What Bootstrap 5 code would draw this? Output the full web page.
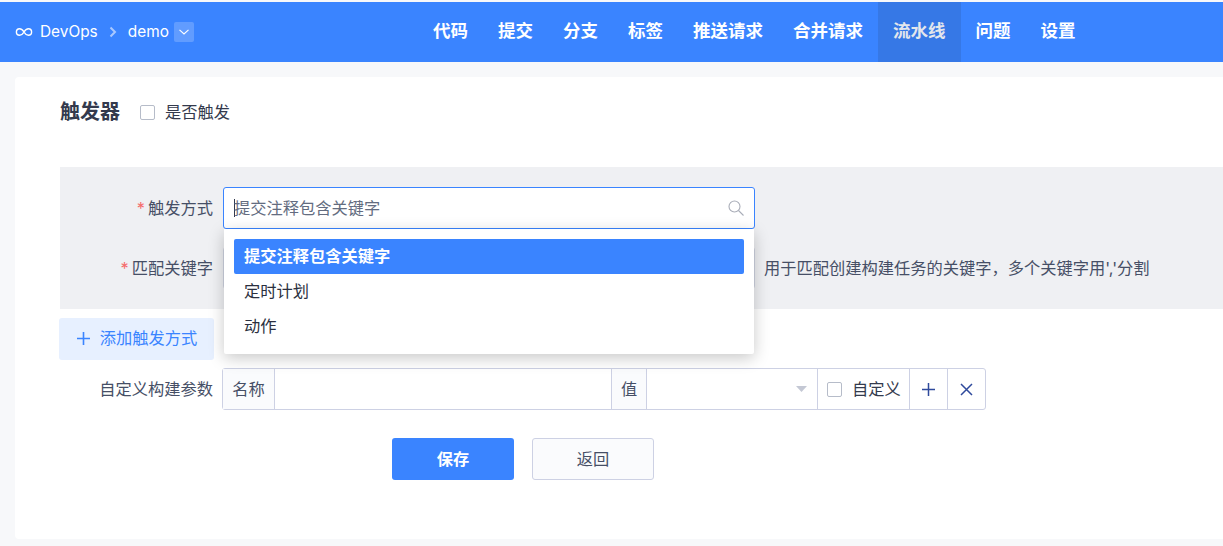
<!DOCTYPE html>
<html lang="zh-CN">
<head>
<meta charset="utf-8">
<title>流水线</title>
<link href="https://cdn.jsdelivr.net/npm/bootstrap@5.3.0/dist/css/bootstrap.min.css" rel="stylesheet">
<style>
html,body{height:546px;overflow:hidden}
body{background:#f7f8fa;font-family:Inter,"Noto Sans CJK SC",sans-serif;font-size:16.25px;color:#333a4d;padding-top:2px}
.top-bar{height:60px;background:#3a84ff;color:#fff;position:relative}
.crumb{position:absolute;left:15px;top:0;height:60px;font-size:15.4px}
.crumb-ico{margin-right:7px}
.crumb-sep{margin:0 11px 0 11px;color:#a9c8ff}
.crumb-toggle{width:20px;height:20px;border-radius:2px;background:#619cff;margin-left:5px}
.main-tabs{padding-left:418px;height:60px}
.tab-item{padding:0 15px;line-height:58px;font-size:17.5px;font-weight:700;color:#fff;text-decoration:none;display:block;height:60px}
.tab-item.on{background:#3678e6;color:#e3e6ec}
.sheet{margin:15px 0 0 15px;height:462px;background:#fff;border-radius:4px 0 0 4px;padding:0 0 0 45px;position:relative}
.head-row{height:70px}
.head-title{font-size:20px;font-weight:700;color:#333a4d;margin:0}
.tick{width:15px;height:15px;border:1px solid #b6bcc9;border-radius:2px;background:#fff;flex:none}
.tick-main{margin:0 10px 0 20px}
.gray-panel{margin-top:20px;height:142px;background:#eff0f3;padding-top:20px}
.form-line{height:42px}
.form-line+.form-line{margin-top:18px}
.lbl{width:163px;text-align:right;padding:0 10px 0 0;flex:none;color:#464f66}
.req{color:#f56c6c;margin-right:3px}
.fake-input{width:532px;height:42px;background:#fff;border:1px solid #3a84ff;border-radius:3px;flex:none;position:relative;padding:0 0 0 10px;color:#636c80}
.fake-input.plain{border-color:#cfd3e0}
.caret{width:1px;height:18px;background:#333a4d;margin-right:-1px}
.search-ico{position:absolute;right:9px;top:11px}
.tip{margin-left:9px;color:#464f66}
.menu-pop{position:absolute;left:209px;top:152px;width:530px;height:125px;background:#fff;box-shadow:0 4px 16px rgba(0,0,0,.22);padding:10px;z-index:5;border-radius:0 0 2px 2px}
.menu-entry{height:35px;line-height:35px;padding-left:10px;border-radius:2px;color:#2b3040}
.menu-entry.on{background:#3a84ff;color:#fff;font-weight:700}
.add-btn{margin:9px 0 0 -1px;width:155px;height:42px;background:#e7f0ff;color:#3a84ff;border:0;border-radius:3px;padding:0 0 1px}
.add-ico{margin-right:9px}
.param-row{margin-top:8px;height:42px}
.param-group{height:42px;border:1px solid #cdd1e4;border-radius:3px;background:#fff;margin-left:-1px;width:764px;flex:none}
.cell{height:100%;border-right:1px solid #cdd1e4;flex:none}
.cell:last-child{border-right:0}
.cell-gray{background:#fafbfd;color:#464f66}
.act-row{padding-left:332px;margin-top:28px}
.btn-go,.btn-back{width:122px;height:42px;border-radius:3px;font-size:16.25px;padding:0}
.btn-go{background:#3a84ff;color:#fff;border:0;font-weight:700;margin-right:18px}
.btn-back{background:#fafbfd;color:#464f66;border:1px solid #cdd1e4}
</style>
</head>
<body>
<header class="top-bar">
  <div class="crumb d-flex align-items-center">
    <svg class="crumb-ico" width="18" height="10" viewBox="0 0 18 10" fill="none" stroke="#fff" stroke-width="1.4"><path d="M9 5C7.5 2.500 6.200 1.800 4.600 1.800A3.200 3.200 0 0 0 4.600 8.200C6.200 8.200 7.500 7.500 9 5C10.500 2.500 11.800 1.800 13.400 1.800A3.200 3.200 0 0 1 13.400 8.200C11.800 8.200 10.500 7.500 9 5Z"/></svg>
    <span>DevOps</span>
    <svg class="crumb-sep" width="8" height="12" viewBox="0 0 8 12" fill="none" stroke="currentColor" stroke-width="2"><path d="M1.500 1.500L6 6L1.500 10.500"/></svg>
    <span>demo</span>
    <span class="crumb-toggle d-flex align-items-center justify-content-center">
      <svg width="10" height="6" viewBox="0 0 10 6" fill="none" stroke="#fff" stroke-width="1.100"><path d="M.5.8L5 5L9.500.8"/></svg>
    </span>
  </div>
  <nav class="main-tabs d-flex">
    <a class="tab-item" href="#">代码</a>
    <a class="tab-item" href="#">提交</a>
    <a class="tab-item" href="#">分支</a>
    <a class="tab-item" href="#">标签</a>
    <a class="tab-item" href="#">推送请求</a>
    <a class="tab-item" href="#">合并请求</a>
    <a class="tab-item on" href="#">流水线</a>
    <a class="tab-item" href="#">问题</a>
    <a class="tab-item" href="#">设置</a>
  </nav>
</header>
<main class="sheet">
  <div class="head-row d-flex align-items-center">
    <h2 class="head-title">触发器</h2>
    <span class="tick tick-main"></span>
    <span>是否触发</span>
  </div>
  <section class="gray-panel">
    <div class="form-line d-flex align-items-center">
      <div class="lbl"><span class="req">*</span>触发方式</div>
      <div class="fake-input d-flex align-items-center">
        <span class="caret"></span><span>提交注释包含关键字</span>
        <svg class="search-ico" width="18" height="18" viewBox="0 0 18 18" fill="none" stroke="#a9adb8" stroke-width="1.100"><circle cx="7.500" cy="7.500" r="5.500"/><path d="M11.500 11.500L16.500 16.500"/></svg>
      </div>
    </div>
    <div class="form-line d-flex align-items-center">
      <div class="lbl"><span class="req">*</span>匹配关键字</div>
      <div class="fake-input plain"></div>
      <div class="tip">用于匹配创建构建任务的关键字，多个关键字用','分割</div>
    </div>
  </section>
  <div class="menu-pop">
    <div class="menu-entry on">提交注释包含关键字</div>
    <div class="menu-entry">定时计划</div>
    <div class="menu-entry">动作</div>
  </div>
  <button class="add-btn d-flex align-items-center justify-content-center" type="button">
    <svg class="add-ico" width="15" height="15" viewBox="0 0 15 15" stroke="#3a84ff" stroke-width="1.600"><path d="M7.500 1V14M1 7.500H14"/></svg>添加触发方式
  </button>
  <div class="param-row d-flex align-items-center">
    <div class="lbl">自定义构建参数</div>
    <div class="param-group d-flex">
      <div class="cell cell-gray d-flex align-items-center justify-content-center" style="width:52px">名称</div>
      <div class="cell" style="width:337px"></div>
      <div class="cell cell-gray d-flex align-items-center justify-content-center" style="width:35px">值</div>
      <div class="cell d-flex align-items-center justify-content-end" style="width:171px;padding-right:10px">
        <svg width="11" height="6" viewBox="0 0 11 6"><path d="M0 0H11L5.500 6Z" fill="#c4c8d4"/></svg>
      </div>
      <div class="cell d-flex align-items-center" style="width:92px;padding-left:9px">
        <span class="tick" style="margin-right:10px"></span><span>自定义</span>
      </div>
      <div class="cell d-flex align-items-center justify-content-center" style="width:38px">
        <svg width="15" height="15" viewBox="0 0 15 15" stroke="#2f4a9c" stroke-width="1.500"><path d="M7.500 1V14M1 7.500H14"/></svg>
      </div>
      <div class="cell d-flex align-items-center justify-content-center" style="width:37px">
        <svg width="13" height="13" viewBox="0 0 13 13" stroke="#2f4a9c" stroke-width="1.500"><path d="M1 1L12 12M12 1L1 12"/></svg>
      </div>
    </div>
  </div>
  <div class="act-row d-flex">
    <button class="btn-go" type="button">保存</button>
    <button class="btn-back" type="button">返回</button>
  </div>
</main>
<script src="https://cdn.jsdelivr.net/npm/bootstrap@5.3.0/dist/js/bootstrap.bundle.min.js"></script>
</body>
</html>
